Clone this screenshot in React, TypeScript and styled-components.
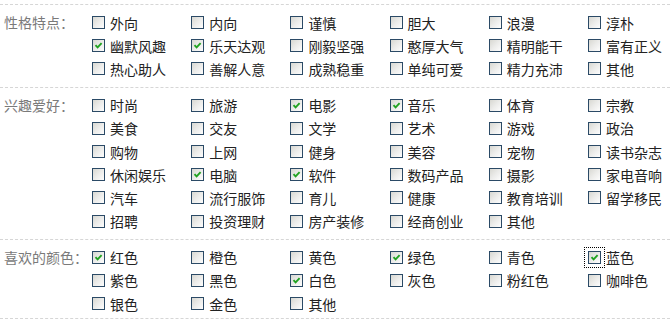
import styled, { createGlobalStyle } from 'styled-components';

interface Option {
  text: string;
  checked?: boolean;
  focused?: boolean;
}

interface Group {
  label: string;
  options: Option[];
}

const opts = (list: string, checked: string[] = [], focused = ''): Option[] =>
  list.split(' ').map((text) => ({ text, checked: checked.includes(text), focused: text === focused }));

const groups: Group[] = [
  {
    label: '性格特点：',
    options: opts(
      '外向 内向 谨慎 胆大 浪漫 淳朴 幽默风趣 乐天达观 刚毅坚强 憨厚大气 精明能干 富有正义 热心助人 善解人意 成熟稳重 单纯可爱 精力充沛 其他',
      ['幽默风趣', '乐天达观'],
    ),
  },
  {
    label: '兴趣爱好：',
    options: opts(
      '时尚 旅游 电影 音乐 体育 宗教 美食 交友 文学 艺术 游戏 政治 购物 上网 健身 美容 宠物 读书杂志 休闲娱乐 电脑 软件 数码产品 摄影 家电音响 汽车 流行服饰 育儿 健康 教育培训 留学移民 招聘 投资理财 房产装修 经商创业 其他',
      ['电影', '音乐', '电脑', '软件'],
    ),
  },
  {
    label: '喜欢的颜色：',
    options: opts('红色 橙色 黄色 绿色 青色 蓝色 紫色 黑色 白色 灰色 粉红色 咖啡色 银色 金色 其他', ['红色', '绿色', '蓝色', '白色'], '蓝色'),
  },
];

const GlobalStyle = createGlobalStyle`
  body {
    margin: 0;
    background: #fff;
    font-family: "Noto Sans CJK SC", "Noto Sans", sans-serif;
  }
`;

const Form = styled.div`
  width: 670px;
  padding-top: 4px;
`;

const Section = styled.div`
  display: flex;
  border-top: 1px dashed #d6d6d6;
  padding: 6px 0 6px;

  &:last-child {
    border-bottom: 1px dashed #d6d6d6;
    padding-bottom: 3px;
  }
`;

const Label = styled.div`
  width: 92px;
  flex-shrink: 0;
  padding-left: 4px;
  box-sizing: border-box;
  font-size: 14px;
  line-height: 23.2px;
  color: #7a7a7a;
  white-space: nowrap;
`;

const Options = styled.div`
  display: grid;
  grid-template-columns: repeat(6, 99.2px);
  grid-auto-rows: 23.2px;
`;

const Item = styled.label`
  display: flex;
  align-items: center;
  gap: 5px;
  font-size: 14px;
  color: #222;
  white-space: nowrap;
`;

const BoxWrap = styled.span<{ $focused?: boolean }>`
  display: inline-flex;
  padding: 3px;
  margin: -3px;
  outline: ${(p) => (p.$focused ? '1px dotted #000' : 'none')};
`;

const Box = styled.span`
  width: 11px;
  height: 11px;
  border: 1px solid #2b4a66;
  background: linear-gradient(135deg, #d8d8d2 0%, #ececea 50%, #fdfdfd 100%);
  display: inline-flex;
  align-items: center;
  justify-content: center;
`;

const Check = () => (
  <svg width="9" height="9" viewBox="0 0 9 9">
    <path d="M1.5 4.2 L3.6 6.4 L7.6 2.2" fill="none" stroke="#21a221" strokeWidth="1.9" />
  </svg>
);

const App = () => (
  <>
    <GlobalStyle />
    <Form>
      {groups.map((g) => (
        <Section key={g.label}>
          <Label>{g.label}</Label>
          <Options>
            {g.options.map((o, i) => (
              <Item key={i}>
                <BoxWrap $focused={o.focused}>
                  <Box>{o.checked && <Check />}</Box>
                </BoxWrap>
                {o.text}
              </Item>
            ))}
          </Options>
        </Section>
      ))}
    </Form>
  </>
);

export default App;
